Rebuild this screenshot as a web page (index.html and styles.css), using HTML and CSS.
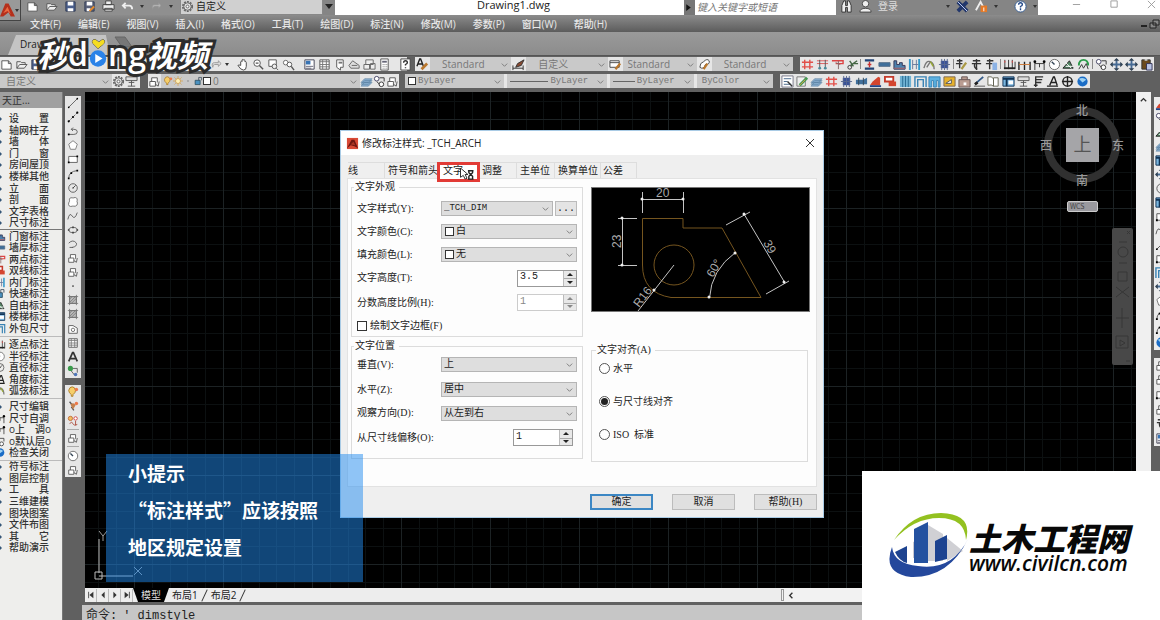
FILE: index.html
```html
<!DOCTYPE html>
<html lang="zh-CN">
<head>
<meta charset="utf-8">
<title>Drawing1.dwg</title>
<link rel="stylesheet" href="styles.css">
</head>
<body>
<svg class="defs" aria-hidden="true">
<symbol id="new" viewBox="0 0 14 14"><path d="M2 3h7l3 3v6H2zM9 3v3h3" fill="#fff" stroke="#555"/></symbol>
<symbol id="open" viewBox="0 0 14 14"><path d="M2 11V4h4l1 1h4v2M2 11l3-4h8l-3 4z" fill="#eee" stroke="#555"/></symbol>
<symbol id="save" viewBox="0 0 14 14"><path d="M2 2h10v10H2z" fill="#4a5f8c" stroke="#333c55"/><path d="M4 2h6v4H4zM4 9h6v3H4z" fill="#fff"/></symbol>
<symbol id="saveas" viewBox="0 0 14 14"><path d="M2 2h10v10H2z" fill="#59617a" stroke="#333c55"/><path d="M4 2h6v4H4zM4 9h4v3H4z" fill="#fff"/><path d="M7 12l5-5" stroke="#e58a2a" stroke-width="2"/></symbol>
<symbol id="print" viewBox="0 0 14 14"><path d="M4 1h6v4H4zM1 5h12v5H1zM3 9h8v3H3z" fill="#eee" stroke="#444"/></symbol>
<symbol id="undo" viewBox="0 0 14 14"><path d="M5 3L2 6l3 3M2 6h7q3 0 3 4" fill="none" stroke="#eee" stroke-width="2"/></symbol>
<symbol id="redo" viewBox="0 0 14 14"><path d="M9 3l3 3-3 3V7H5q-2 0-2 3Q1 5 5 5h4z" fill="#ddd" stroke="#999"/></symbol>
<symbol id="gear" viewBox="0 0 14 14"><circle cx="7" cy="7" r="5" fill="none" stroke="#666" stroke-width="2" stroke-dasharray="2 1.2"/><circle cx="7" cy="7" r="4" fill="#ddd" stroke="#666"/><circle cx="7" cy="7" r="1.500" fill="#fff" stroke="#666"/></symbol>
<symbol id="hand" viewBox="0 0 14 14"><path d="M4 8V4q1-1 1.500 0V2q1-1 1.500 0v0q1-1 1.500 1v1q1-1 1.500 1v4q0 4-3 4-3 0-6-5 1-1 3 0z" fill="#fff" stroke="#444"/></symbol>
<symbol id="zoom" viewBox="0 0 14 14"><circle cx="5.500" cy="5.500" r="3.500" fill="#fff" stroke="#555"/><path d="M8 8l4 4M4 5.500h3" stroke="#555" stroke-width="1.500"/></symbol>
<symbol id="zwin" viewBox="0 0 14 14"><path d="M2 2h8v7H2z" fill="#fff" stroke="#555"/><circle cx="8" cy="9" r="2.500" fill="#eee" stroke="#555"/><path d="M10 11l2 2" stroke="#555"/></symbol>
<symbol id="zprev" viewBox="0 0 14 14"><circle cx="4" cy="5" r="2.500" fill="#fff" stroke="#666"/><circle cx="8" cy="7" r="2.500" fill="#fff" stroke="#555"/><path d="M10 9l3 4" stroke="#555" stroke-width="1.500"/></symbol>
<symbol id="sheet" viewBox="0 0 14 14"><path d="M2 2h10v10H2z" fill="#fff" stroke="#445"/><path d="M3 3h5v4H3z" fill="#3874b5"/><path d="M3 9h8M3 11h6" stroke="#667"/></symbol>
<symbol id="table" viewBox="0 0 14 14"><path d="M2 2h10v10H2z" fill="#fff" stroke="#555"/><path d="M2 4h10M2 7h10M2 9.500h10M5 2v10M9 2v10" stroke="#777"/></symbol>
<symbol id="page" viewBox="0 0 14 14"><path d="M4 2h7v8H8v3L4 10z" fill="#fff" stroke="#555"/><path d="M6 4h4v2H6z" fill="#777"/></symbol>
<symbol id="house" viewBox="0 0 14 14"><path d="M1 8l4-5 7 5v3H3zM4 8h6" fill="#ddd" stroke="#666"/></symbol>
<symbol id="boxes" viewBox="0 0 14 14"><path d="M3 2h8v5H3zM1 7h6v5H1zM8 6h5v6H8z" fill="#eee" stroke="#666"/></symbol>
<symbol id="calc" viewBox="0 0 14 14"><path d="M3 1h8v12H3z" fill="#fff" stroke="#555"/><path d="M4.500 3h5v2h-5z" fill="#667"/><path d="M5 7h5M5 9h5M5 11h5" stroke="#777" stroke-dasharray="1 1"/></symbol>
<symbol id="help" viewBox="0 0 14 14"><path d="M2 1h10v12H2z" fill="#fff" stroke="#444"/><path d="M5 5q0-2 2-2t2 2q0 1-2 2v1m0 2v1" fill="none" stroke="#333" stroke-width="1.500"/></symbol>
<symbol id="astyle" viewBox="0 0 14 14"><path d="M1 9l3-8h1l3 8M2.500 6.500h4" fill="none" stroke="#222" stroke-width="1.500"/><path d="M6 12l6-6" stroke="#b9772e" stroke-width="3"/></symbol>
<symbol id="dstyle" viewBox="0 0 14 14"><path d="M1 11h11M1 8v5M12 8v5" stroke="#333"/><path d="M4 10l2-4 7-4-3 6z" fill="#8b4b31" stroke="#333"/></symbol>
<symbol id="tstyle" viewBox="0 0 14 14"><path d="M1 3h10v7H1zM1 5h10" fill="#fff" stroke="#444"/><path d="M7 12l5-6" stroke="#b9772e" stroke-width="2.500"/></symbol>
<symbol id="mstyle" viewBox="0 0 14 14"><path d="M2 10q0-5 4-6 4-4 6-1 1 4-4 4-2 6-6 3z" fill="#fff" stroke="#444"/><path d="M6 12l4-6" stroke="#b9772e" stroke-width="2.500"/></symbol>
<symbol id="hash" viewBox="0 0 14 14"><path d="M4 2v10M9.500 2v10M1 4.500h12M1 9.500h12" stroke="#e2504a" stroke-width="1.500"/></symbol>
<symbol id="hash2" viewBox="0 0 14 14"><path d="M1 3h12M1 6h12" stroke="#d55"/><path d="M4 2v8M10 2v8" stroke="#555"/><circle cx="4" cy="11" r="1.500" fill="#4a8a9a"/><circle cx="10" cy="11" r="1.500" fill="#4a8a9a"/></symbol>
<symbol id="axis" viewBox="0 0 14 14"><path d="M1 3h12v3H5" fill="none" stroke="#d44" stroke-width="1.500"/><path d="M8 3v9M5 5l5 2" stroke="#866"/></symbol>
<symbol id="snip" viewBox="0 0 14 14"><circle cx="4" cy="10" r="2" fill="none" stroke="#333"/><path d="M5 8l7-5M4 3l4 6M8 6h5" stroke="#464" stroke-width="1.500"/></symbol>
<symbol id="ibeam" viewBox="0 0 14 14"><path d="M2 2.500h10M2 11.500h10" stroke="#247" stroke-width="2.500"/><path d="M7 4v6M5 7h4" stroke="#c33" stroke-width="1.500"/></symbol>
<symbol id="wall" viewBox="0 0 14 14"><path d="M1 5h12v4H1z" fill="#3f6f9b" stroke="#57708a"/></symbol>
<symbol id="wall2" viewBox="0 0 14 14"><path d="M1 5h8l4-2v7H1z" fill="#3f6f9b"/><path d="M4 3v8M9 3v8" stroke="#345"/></symbol>
<symbol id="stair" viewBox="0 0 14 14"><path d="M1 12V3h3v4h3V5h3v3h3v4z" fill="#4c80ad" stroke="#335"/><path d="M1 11h12" stroke="#b66"/></symbol>
<symbol id="column" viewBox="0 0 14 14"><path d="M2 1v12M12 1v12" stroke="#39c" stroke-width="2"/><path d="M5 2v10M9 2v10M5 7h6" stroke="#679"/></symbol>
<symbol id="arcd" viewBox="0 0 14 14"><path d="M1 11Q3 2 8 4q4 2 4 8M8 4l-4 6" fill="none" stroke="#777" stroke-width="1.500"/><path d="M8 4l3 5" stroke="#9a3" stroke-width="1.500"/></symbol>
<symbol id="block" viewBox="0 0 14 14"><path d="M3 3h8v8H3z" fill="#38519a"/><path d="M7 1v12M1 7h12M4 1v12M10 1v12" stroke="#57698f"/></symbol>
<symbol id="chair" viewBox="0 0 14 14"><path d="M7 1v12M3 3h8M2 6h10M5 6q-1 5 3 6" fill="none" stroke="#333" stroke-width="1.500"/></symbol>
<symbol id="chairg" viewBox="0 0 14 14"><path d="M5 1v10M2 3h6M1 6h7" stroke="#333" stroke-width="1.500"/><path d="M7 12l5-7" stroke="#a94" stroke-width="2.500"/></symbol>
<symbol id="chairb" viewBox="0 0 14 14"><path d="M5 1v11M2 3h7M1 6h7" stroke="#333" stroke-width="1.500"/><path d="M8 5h5v8H8z" fill="#8bb2e5"/></symbol>
<symbol id="dimv" viewBox="0 0 14 14"><path d="M2 2v10M6 2v10M10 2v10M13 4v8" stroke="#333"/><path d="M1 11h12" stroke="#222" stroke-width="2"/><path d="M2 3v2M10 3v2" stroke="#e44"/></symbol>
<symbol id="dimh" viewBox="0 0 14 14"><path d="M1 4v9M7 4v9M13 4v9" stroke="#222" stroke-width="1.500"/><path d="M1 7h12" stroke="#c73"/></symbol>
<symbol id="dimb" viewBox="0 0 14 14"><path d="M2 4v9M12 4v9M2 6h10M7 6v4" stroke="#333"/><circle cx="2" cy="4" r="1.500"/><circle cx="12" cy="4" r="1.500"/></symbol>
<symbol id="clock" viewBox="0 0 14 14"><circle cx="7" cy="7" r="5.500" fill="#fff" stroke="#666"/><path d="M7 7L4 4" stroke="#345" stroke-width="1.500"/></symbol>
<symbol id="tri" viewBox="0 0 14 14"><path d="M1 11l7-8 4 8z" fill="#586" stroke="#222"/><path d="M4 9h8M4 5l6 6" stroke="#fff"/></symbol>
<symbol id="cycle" viewBox="0 0 14 14"><path d="M2 8q0-6 5-6t5 6" fill="none" stroke="#2b9b49" stroke-width="2"/><path d="M2 12l3-5 2 4 3-5 2 6" fill="none" stroke="#333"/></symbol>
<symbol id="links" viewBox="0 0 14 14"><circle cx="4" cy="4" r="2.500" fill="#fff" stroke="#446"/><circle cx="9" cy="10" r="2.500" fill="#fff" stroke="#333"/><path d="M7 3h5v4M4 7l3 3" fill="none" stroke="#333"/></symbol>
<symbol id="move" viewBox="0 0 14 14"><path d="M7 1v12M1 7h12" stroke="#456a94" stroke-width="2"/><path d="M7 0l3 3H4zM7 14l3-3H4zM0 7l3-3v6zM14 7l-3-3v6z" fill="#345"/></symbol>
<symbol id="paste" viewBox="0 0 14 14"><path d="M2 2h9v10H2z" fill="#6b4a1d" stroke="#333"/><path d="M5 1h3v2H5z" fill="#ccc"/><path d="M7 6h6v7H7z" fill="#b9c4e5" stroke="#335"/></symbol>
<symbol id="list" viewBox="0 0 14 14"><path d="M1 1h12v12H1z" fill="#fff" stroke="#778"/><path d="M3 4h8M3 7h4M3 10h8" stroke="#468"/><path d="M7 7l5 5" stroke="#333" stroke-width="1.500"/></symbol>
<symbol id="pencil" viewBox="0 0 14 14"><path d="M1 2h9v10H1z" fill="#eee" stroke="#777"/><path d="M4 11l8-8" stroke="#495" stroke-width="3"/><path d="M4 11l6-6" stroke="#e0a545"/></symbol>
<symbol id="layers" viewBox="0 0 14 14"><path d="M1 8l4-4h8l-4 4zM1 10l4-4h8l-4 4zM1 12l4-4h8l-4 4z" fill="#8aafd0" stroke="#557c9d" stroke-width=".6"/></symbol>
<symbol id="roof" viewBox="0 0 14 14"><path d="M1 11l3-4 6-5 2 1v8z" fill="#d4452f"/><path d="M1 12h12" stroke="#248" stroke-width="2"/></symbol>
<symbol id="redbox" viewBox="0 0 14 14"><path d="M1 2h9v5H1z" fill="#fff" stroke="#c43b2b" stroke-width="2"/><path d="M5 7h8v5H5z" fill="#d4452f"/></symbol>
<symbol id="curtain" viewBox="0 0 14 14"><path d="M1 1h12v12H1z" fill="#6fb2d3"/><path d="M4 1v12M7 1v12M10 1v12" stroke="#28698f"/></symbol>
<symbol id="frame" viewBox="0 0 14 14"><path d="M1 13V2h12v11M4 13V5h6v8" fill="none" stroke="#3983b4" stroke-width="1.500"/></symbol>
<symbol id="frame2" viewBox="0 0 14 14"><path d="M1 13V2h12v11h-2V6H9v7H6V6H4v7z" fill="#5bb0e0" stroke="#3983b4"/></symbol>
<symbol id="note" viewBox="0 0 14 14"><path d="M1 2h12v10H1z" fill="#e6b12c" stroke="#765"/><path d="M3 9l6-4v4z" fill="#fff" stroke="#555"/></symbol>
<symbol id="bag" viewBox="0 0 14 14"><path d="M1 5h12v8H1zM4 5V2h6v3" fill="#b99c91" stroke="#655"/><path d="M6 8h3v3H6z" fill="#fff"/></symbol>
<symbol id="brush" viewBox="0 0 14 14"><path d="M1 12h12" stroke="#555"/><path d="M3 9l8-7" stroke="#345b89" stroke-width="2"/><path d="M2 10l3-2" stroke="#222" stroke-width="3"/></symbol>
<symbol id="pages" viewBox="0 0 14 14"><path d="M1 2q4-1 6 2v8q-2-2-6-1zM7 3h5v9H7z" fill="#fff" stroke="#665"/></symbol>
<symbol id="window" viewBox="0 0 14 14"><path d="M1 2h12v10H1z" fill="#7ab6df" stroke="#135"/><path d="M1 4h12M5 4v8" stroke="#135" stroke-width="2"/><path d="M7 6h5v4H7z" fill="#fff"/></symbol>
<symbol id="lamp" viewBox="0 0 14 14"><path d="M1 2h12v4H1zM7 6v6M3 12h8M4 8h6" fill="#ddd" stroke="#555"/></symbol>
<symbol id="ef" viewBox="0 0 14 14"><path d="M4 13V2h8M4 5h7M4 8h6M2 11h4" fill="none" stroke="#333" stroke-width="1.500"/></symbol>
<symbol id="atext" viewBox="0 0 14 14"><path d="M4 11l4-9h1l3 9M5 8h6M1 12h12" fill="none" stroke="#222" stroke-width="1.500"/></symbol>
<symbol id="target" viewBox="0 0 14 14"><circle cx="7" cy="7" r="5" fill="none" stroke="#222" stroke-width="1.500"/><path d="M7 1v12M1 7h12" stroke="#222" stroke-width="1.500"/></symbol>
<symbol id="globe" viewBox="0 0 14 14"><circle cx="7" cy="7" r="5.500" fill="#1b6dc6"/><path d="M3 4q5-2 8 1l-4 3z" fill="#9ed2f3"/></symbol>
<symbol id="line" viewBox="0 0 14 14"><path d="M2 12L12 2" stroke="#555"/><circle cx="2" cy="12" r="1"/><circle cx="12" cy="2" r="1"/></symbol>
<symbol id="pline" viewBox="0 0 14 14"><path d="M2 12L12 2" stroke="#555" stroke-dasharray="3 1"/><circle cx="2" cy="12" r="1.300"/><circle cx="7" cy="7" r="1.300"/><circle cx="12" cy="2" r="1.300"/></symbol>
<symbol id="poly" viewBox="0 0 14 14"><path d="M2 11h6q4 0 4-3t-4-3H5M7 3L5 5l2 2" fill="none" stroke="#555"/><path d="M1 10h2v2H1z"/></symbol>
<symbol id="pent" viewBox="0 0 14 14"><path d="M7 2l5 4-2 6H4L2 6z" fill="#fff" stroke="#777"/></symbol>
<symbol id="rect" viewBox="0 0 14 14"><path d="M2 4h10v7H2z" fill="#fff" stroke="#555"/><path d="M1 10h2v2H1zM11 3h2v2h-2z"/></symbol>
<symbol id="arc" viewBox="0 0 14 14"><path d="M2 12Q2 4 12 3" fill="none" stroke="#555"/><path d="M1 11h2v2H1zM4 5h2v2H4zM11 2h2v2h-2z"/></symbol>
<symbol id="circle" viewBox="0 0 14 14"><circle cx="7" cy="7" r="5" fill="none" stroke="#555"/><path d="M7 7l3-3M6 7h2" stroke="#333"/></symbol>
<symbol id="cloud" viewBox="0 0 14 14"><path d="M3 5q-1-3 3-3 1 1 2 0 4-1 4 3-1 1 0 2 1 5-4 5-1-1-2 0-5 1-4-4 1-1 1-3z" fill="#fff" stroke="#666"/></symbol>
<symbol id="region" viewBox="0 0 14 14"><path d="M2 3h5l5 3v6H2z" fill="#fff" stroke="#555"/><circle cx="7" cy="8" r="2" fill="none" stroke="#666"/></symbol>
<symbol id="spline" viewBox="0 0 14 14"><path d="M1 11q2-9 5-4t6-4" fill="none" stroke="#555"/></symbol>
<symbol id="ellipse" viewBox="0 0 14 14"><ellipse cx="7" cy="7" rx="5" ry="3" fill="none" stroke="#555"/><path d="M6 3h2v2H6zM6 9h2v2H6zM1 6h2v2H1zM11 6h2v2h-2z" fill="#444"/></symbol>
<symbol id="earc" viewBox="0 0 14 14"><path d="M2 6q5-5 9 0 1 4-5 5M3 11h4" fill="none" stroke="#555"/></symbol>
<symbol id="insert" viewBox="0 0 14 14"><path d="M4 7V3h6v5M2 7h6v5H2z" fill="#fff" stroke="#555"/><path d="M8 10l3 2 1-5" fill="none" stroke="#555"/></symbol>
<symbol id="dot" viewBox="0 0 14 14"><circle cx="7" cy="7" r="1" fill="#333"/></symbol>
<symbol id="hatch" viewBox="0 0 14 14"><path d="M3 3h8v8H3z" fill="#bbb" stroke="#666"/><path d="M3 6l3-3M3 10l7-7M5 11l6-6M1 3h12M1 11h12M3 1v12M11 1v12" stroke="#777"/></symbol>
<symbol id="letter" viewBox="0 0 14 14"><path d="M2 12L6.500 2h1L12 12M4 9h6" fill="none" stroke="#333" stroke-width="2"/></symbol>
<symbol id="greenlink" viewBox="0 0 14 14"><circle cx="4" cy="4" r="3" fill="#3a9b4c"/><path d="M7 4h5v5M5 7l4 5" fill="none" stroke="#555"/><circle cx="10" cy="11" r="2" fill="#4d75b8"/></symbol>
<symbol id="bulb" viewBox="0 0 14 14"><path d="M5 10q-3-2-3-5 1-4 4-4t4 4q0 3-3 5v2H5z" fill="#f6ce69" stroke="#a77722"/><circle cx="11" cy="4" r="2" fill="#ec7849"/></symbol>
<symbol id="bulb2" viewBox="0 0 14 14"><path d="M3 2l5 6M8 12L5 8" stroke="#555" stroke-width="1.500"/><path d="M4 5q4-3 6 1l-3 5z" fill="#c4804d"/><circle cx="11" cy="4" r="2" fill="#ec7849"/></symbol>
<symbol id="bulb3" viewBox="0 0 14 14"><circle cx="4" cy="4" r="2.500" fill="#f3bc5c" stroke="#b63"/><circle cx="10" cy="4" r="2" fill="#fff" stroke="#c33"/><path d="M3 10q3-3 4 0t5 1M10 7v5" fill="none" stroke="#a43"/></symbol>
<symbol id="sun" viewBox="0 0 14 14"><circle cx="7" cy="7" r="3.500" fill="#fff0b7" stroke="#c69138"/><path d="M7 0v3M7 11v3M0 7h3M11 7h3M2 2l2 2M10 10l2 2M12 2l-2 2M4 10l-2 2" stroke="#d6a14b"/></symbol>
<symbol id="lock" viewBox="0 0 14 14"><path d="M3 6h7v6H3z" fill="#4a91c0" stroke="#245"/><path d="M8 6V2h4v4" fill="none" stroke="#345"/></symbol>
<symbol id="bino" viewBox="0 0 14 14"><path d="M2 13V6l2-5h2v5h2V1h2l2 5v7H8V8H6v5z" fill="#eee" stroke="#333"/></symbol>
<symbol id="user" viewBox="0 0 14 14"><circle cx="7" cy="4" r="3.500" fill="#eee" stroke="#444"/><path d="M1 13q0-4 6-4t6 4z" fill="#eee" stroke="#444"/></symbol>
<symbol id="app" viewBox="0 0 14 14"><path d="M0 13L5 1h3l6 12h-4L8 9l-5 4z" fill="#b5301c"/><path d="M3 10l4-6 3 7-3-3z" fill="#ed6a42"/></symbol>
</svg>

<header class="titlebar">
  <button class="app-button" aria-label="应用程序"><svg><use href="#app"/></svg><i class="caret"></i></button>
  <div class="quick"><svg><use href="#new"/></svg><svg><use href="#open"/></svg><svg><use href="#save"/></svg><svg><use href="#saveas"/></svg><svg><use href="#print"/></svg><svg><use href="#undo"/></svg><i class="caret"></i><svg class="faint"><use href="#redo"/></svg><i class="caret"></i></div>
  <div class="workspace-pick"><svg><use href="#gear"/></svg><select aria-label="工作空间"><option>自定义</option></select></div>
  <i class="quick-more"></i>
  <div class="doc-title">Drawing1.dwg</div>
  <button class="expand" aria-label="展开"><svg viewBox="0 0 8 8"><path d="M2 1v6l4-3z" fill="#111"/></svg></button>
  <input class="search" type="text" aria-label="搜索" placeholder="键入关键字或短语">
  <div class="account"><svg><use href="#bino"/></svg><svg><use href="#user"/></svg><span>登录</span><i class="caret push"></i>
    <svg viewBox="0 0 14 14"><path d="M2 2l10 10M12 2L2 12" stroke="#22376c" stroke-width="4"/><path d="M2 2l10 10" stroke="#c9d7ff"/></svg>
    <svg class="mid" viewBox="0 0 14 14"><path d="M1 11L6 2l4 8" fill="none" stroke="#eee" stroke-width="2"/><path d="M6 6h7v7H6z" fill="#e57a28"/><path d="M9 8h1v4H9z" fill="#fff"/></svg><i class="caret"></i>
    <svg class="ask" viewBox="0 0 14 14"><circle cx="7" cy="7" r="6" fill="#fff" stroke="#31598f"/><path d="M5 5q0-2 2-2t2 2q0 1-2 2v1m0 1v2" fill="none" stroke="#244b8b" stroke-width="1.500"/></svg><i class="caret"></i>
  </div>
  <div class="win-buttons"><svg viewBox="0 0 10 10"><path d="M1 5h8" stroke="#999"/></svg><svg viewBox="0 0 10 10"><path d="M1 1h7v7H1z" fill="none" stroke="#999"/></svg><svg viewBox="0 0 10 10"><path d="M1 1l8 8M9 1L1 9" stroke="#999"/></svg></div>
</header>

<nav class="menubar">
  <a href="#">文件(F)</a><a href="#">编辑(E)</a><a href="#">视图(V)</a><a href="#">插入(I)</a><a href="#">格式(O)</a><a href="#">工具(T)</a><a href="#">绘图(D)</a><a href="#">标注(N)</a><a href="#">修改(M)</a><a href="#">参数(P)</a><a href="#">窗口(W)</a><a href="#">帮助(H)</a>
  <svg class="mdi" viewBox="0 0 20 10"><path d="M1 7h6" stroke="#222" stroke-width="2"/><path d="M13 1h6v5h-6zM10 4h6v5h-6z" fill="#888" stroke="#222"/></svg>
</nav>

<div class="doc-tabs"><div class="doc-tab">Draw</div><svg viewBox="0 0 20 14"><path d="M1 2h10l7 10H8z" fill="#777" stroke="#666"/></svg></div>

<div class="toolbars">
  <div class="bar-row">
    <div class="bar std"><svg><use href="#new"/></svg><svg><use href="#open"/></svg><svg><use href="#save"/></svg><svg class="redo-tool"><use href="#redo"/></svg><i class="caret"></i><i class="sep"></i><svg><use href="#hand"/></svg><svg><use href="#zoom"/></svg><svg><use href="#zwin"/></svg><svg><use href="#zprev"/></svg><i class="sep"></i><svg><use href="#sheet"/></svg><svg><use href="#table"/></svg><svg><use href="#page"/></svg><svg><use href="#house"/></svg><svg><use href="#boxes"/></svg><svg><use href="#calc"/></svg><i class="sep"></i><svg><use href="#help"/></svg></div>
    <div class="bar styles">
      <svg><use href="#astyle"/></svg><select aria-label="文字样式"><option>Standard</option></select>
      <svg><use href="#dstyle"/></svg><select aria-label="标注样式"><option>自定义</option></select>
      <svg><use href="#tstyle"/></svg><select class="tight" aria-label="表格样式"><option>Standard</option></select>
      <svg><use href="#mstyle"/></svg><select aria-label="引线样式"><option>Standard</option></select>
    </div>
    <div class="bar arch"><svg><use href="#hash"/></svg><svg><use href="#hash2"/></svg><svg><use href="#axis"/></svg><svg><use href="#snip"/></svg><i class="sep"></i><svg><use href="#ibeam"/></svg><svg><use href="#wall"/></svg><svg><use href="#stair"/></svg><svg><use href="#column"/></svg><svg><use href="#arcd"/></svg><svg><use href="#block"/></svg><i class="sep"></i><svg><use href="#chairg"/></svg><svg><use href="#chair"/></svg><svg><use href="#chairb"/></svg><i class="sep"></i><svg><use href="#dimv"/></svg><svg><use href="#dimh"/></svg><svg><use href="#dimb"/></svg><svg><use href="#clock"/></svg><svg><use href="#tri"/></svg><svg><use href="#cycle"/></svg><i class="sep"></i><svg><use href="#links"/></svg><svg><use href="#move"/></svg><svg><use href="#move"/></svg><svg><use href="#paste"/></svg></div>
  </div>
  <div class="bar-row">
    <div class="bar space"><select aria-label="工作空间"><option>自定义</option></select><svg><use href="#gear"/></svg><svg><use href="#lamp"/></svg></div>
    <div class="bar layer"><svg><use href="#insert"/></svg><div class="layer-pick"><svg><use href="#bulb"/></svg><svg><use href="#sun"/></svg><svg class="faint"><use href="#dot"/></svg><svg><use href="#lock"/></svg><i class="swatch"></i><select aria-label="图层"><option>0</option></select></div><svg><use href="#layers"/></svg><svg><use href="#links"/></svg><svg><use href="#insert"/></svg></div>
    <div class="bar props"><div class="prop"><i class="swatch"></i><select aria-label="颜色"><option>ByLayer</option></select></div><div class="prop"><i class="stroke"></i><select aria-label="线型"><option>ByLayer</option></select></div><div class="prop narrow"><i class="stroke short"></i><select aria-label="线宽"><option>ByLayer</option></select></div><div class="prop last"><select aria-label="打印样式"><option>ByColor</option></select></div></div>
    <div class="bar arch2"><svg><use href="#list"/></svg><svg><use href="#pencil"/></svg><svg><use href="#layers"/></svg><svg><use href="#hash"/></svg><svg><use href="#block"/></svg><svg><use href="#wall2"/></svg><svg><use href="#roof"/></svg><svg><use href="#redbox"/></svg><svg><use href="#curtain"/></svg><svg><use href="#frame"/></svg><svg><use href="#frame2"/></svg><svg><use href="#note"/></svg><svg><use href="#bag"/></svg><svg><use href="#brush"/></svg><svg><use href="#pages"/></svg><svg><use href="#window"/></svg><svg><use href="#lamp"/></svg><svg><use href="#ef"/></svg><svg><use href="#atext"/></svg><svg><use href="#target"/></svg><svg><use href="#globe"/></svg></div>
  </div>
</div>

<main class="work">
  <aside class="side">
    <h2>天正...</h2>
    <ul class="g10"><li>设　　置</li><li>轴网柱子</li><li>墙　　体</li><li>门　　窗</li><li>房间屋顶</li><li>楼梯其他</li><li>立　　面</li><li>剖　　面</li><li>文字表格</li><li>尺寸标注</li></ul>
    <ul class="g9"><li><svg><use href="#stair"/></svg>门窗标注</li><li><svg><use href="#wall"/></svg>墙厚标注</li><li><svg><use href="#axis"/></svg>两点标注</li><li><svg><use href="#redbox"/></svg>双线标注</li><li><svg><use href="#column"/></svg>内门标注</li><li><svg><use href="#lock"/></svg>快速标注</li><li><svg><use href="#tri"/></svg>自由标注</li><li><svg><use href="#window"/></svg>楼梯标注</li><li><svg><use href="#frame"/></svg>外包尺寸</li></ul>
    <ul class="g5"><li><svg><use href="#dimv"/></svg>逐点标注</li><li><svg><use href="#clock"/></svg>半径标注</li><li><svg><use href="#circle"/></svg>直径标注</li><li><svg><use href="#atext"/></svg>角度标注</li><li><svg><use href="#arcd"/></svg>弧弦标注</li></ul>
    <ul class="g5 edit"><li>尺寸编辑</li><li><svg><use href="#dimb"/></svg>尺寸自调</li><li><svg><use href="#dimb"/></svg>o上　调o</li><li><svg><use href="#links"/></svg>o默认层o</li><li><svg><use href="#globe"/></svg>检查关闭</li></ul>
    <ul class="g8"><li>符号标注</li><li>图层控制</li><li>工　　具</li><li>三维建模</li><li>图块图案</li><li>文件布图</li><li>其　　它</li><li>帮助演示</li></ul>
  </aside>

  <div class="stage">
    <div class="stage-top">
      <div class="strip">
        <div class="strip-set draw"><svg><use href="#line"/></svg><svg><use href="#pline"/></svg><svg><use href="#poly"/></svg><svg><use href="#pent"/></svg><svg><use href="#rect"/></svg><svg><use href="#arc"/></svg><svg><use href="#circle"/></svg><svg><use href="#cloud"/></svg><svg><use href="#spline"/></svg><svg><use href="#ellipse"/></svg><svg><use href="#earc"/></svg><svg><use href="#insert"/></svg><svg><use href="#insert"/></svg><svg><use href="#dot"/></svg><svg><use href="#hatch"/></svg><svg><use href="#hatch"/></svg><svg><use href="#region"/></svg><svg><use href="#table"/></svg><svg><use href="#letter"/></svg><svg><use href="#greenlink"/></svg></div>
        <div class="strip-set lights"><svg><use href="#bulb"/></svg><svg><use href="#bulb2"/></svg><svg><use href="#bulb3"/></svg><i></i><svg><use href="#insert"/></svg><i></i><svg><use href="#clock"/></svg><svg><use href="#insert"/></svg></div>
      </div>

      <div class="center">
        <section class="canvas">
          <svg class="ucs" viewBox="0 0 54 52"><path d="M6 9V43M6 46H40M2 42h7v7H2z" fill="none" stroke="#bbb"/><path d="M6 1l4 5 4-5M10 6v5M41 37l8 8M49 37l-8 8" fill="none" stroke="#999"/></svg>

          <div class="compass">
            <b class="north">北</b><b class="west">西</b><b class="top-face">上</b><b class="east">东</b><b class="south">南</b>
            <span class="wcs">WCS</span>
          </div>
          <svg class="navbar" viewBox="0 0 21 137"><rect width="21" height="137" rx="2" fill="#484848"/><g fill="none" stroke="#363636"><path d="M15 3l3 3M18 3l-3 3M14 133h4"/><circle cx="11" cy="24" r="5"/><path d="M7 14h8M7 35h8M6 44h9v9H6zM4 59l13 10M17 59L4 69M10 80v20M4 90h13M4 108h12v12H4zM8 112l5 3-5 3z"/></g></svg>

          <form class="dialog" role="dialog" aria-label="修改标注样式">
            <div class="dlg-title"><svg viewBox="0 0 14 14"><path d="M1 1h12v12H1z" fill="#d94a36"/><path d="M1 12L6 3h3l4 9-4-2-4-1z" fill="#701711"/><path d="M5 8l3-3 2 4z" fill="#a83524"/></svg><span>修改标注样式: _TCH_ARCH</span><button type="button" class="close" aria-label="关闭"><svg viewBox="0 0 10 10"><path d="M1 1l8 8M9 1L1 9" stroke="#333"/></svg></button></div>
            <div class="dlg-tabs"><button type="button" class="t1">线</button><button type="button" class="t2">符号和箭头</button><button type="button" class="t3 active">文字<svg class="cursor" viewBox="0 0 16 14"><path d="M1 0v10l3-2 2 4 2-1-2-4h3z" fill="#fff" stroke="#222"/><path d="M9 3h6M9 12h6M10 3v2l2 2-2 2v3M14 3v2l-2 2 2 2v3" fill="none" stroke="#222" stroke-width="1.500"/></svg></button><button type="button" class="t4">调整</button><button type="button" class="t5">主单位</button><button type="button" class="t6">换算单位</button><button type="button" class="t7">公差</button></div>
            <div class="dlg-body">
              <div class="col-left">
                <fieldset class="look"><legend>文字外观</legend>
                  <label for="style">文字样式(Y):</label><div class="pair"><select id="style"><option>_TCH_DIM</option></select><button type="button" class="dots">...</button></div>
                  <label for="color">文字颜色(C):</label><div class="color"><i class="swatch"></i><select id="color"><option>白</option></select></div>
                  <label for="fill">填充颜色(L):</label><div class="color"><i class="swatch"></i><select id="fill"><option>无</option></select></div>
                  <label for="height">文字高度(T):</label><div class="spin"><input id="height" type="text" value="3.5"><span class="arrows"><button type="button" class="up" aria-label="增大"></button><button type="button" class="down" aria-label="减小"></button></span></div>
                  <label for="ratio">分数高度比例(H):</label><div class="spin off"><input id="ratio" type="text" value="1" disabled><span class="arrows"><button type="button" class="up" aria-label="增大" disabled></button><button type="button" class="down" aria-label="减小" disabled></button></span></div>
                  <label class="check"><input type="checkbox">绘制文字边框(F)</label>
                </fieldset>
                <fieldset class="place"><legend>文字位置</legend>
                  <label for="vert">垂直(V):</label><select id="vert"><option>上</option></select>
                  <label for="horz">水平(Z):</label><select id="horz"><option>居中</option></select>
                  <label for="dir">观察方向(D):</label><select id="dir"><option>从左到右</option></select>
                  <label for="offset">从尺寸线偏移(O):</label><div class="spin inset"><input id="offset" type="text" value="1"><span class="arrows"><button type="button" class="up" aria-label="增大"></button><button type="button" class="down" aria-label="减小"></button></span></div>
                </fieldset>
              </div>
              <div class="col-right">
                <svg class="preview" viewBox="0 0 219 125">
                  <rect width="219" height="125" fill="#777"/><rect x="1" y="1" width="217" height="123" fill="#000"/>
                  <g fill="none" stroke="#75551f"><path d="M51.500 31.500H92V41H131L170 110.500H80Q51.500 106 51.500 78z"/><circle cx="83" cy="78" r="20"/></g>
                  <g fill="none" stroke="#c4c4c4"><path d="M51.500 5V26M92.500 5V26M51 12.500H92M27 31.500H46M27 78.500H46M31.500 31V79M83 78L47 124M135 38l24-13M175 107l23-13M153 27L194 96M118.500 111Q120 83 145 65"/></g>
                  <g fill="#eee"><circle cx="51" cy="12" r="1.500"/><circle cx="92" cy="12" r="1.500"/><circle cx="31" cy="31" r="1.500"/><circle cx="31" cy="78" r="1.500"/><circle cx="63" cy="103" r="1.500"/><circle cx="118" cy="110" r="1.500"/><circle cx="144" cy="66" r="1.500"/><circle cx="153" cy="27" r="1.500"/><circle cx="193" cy="95" r="1.500"/></g>
                  <g class="pv-text"><text x="65" y="10">20</text><text transform="translate(30 61) rotate(-90)">23</text><text transform="translate(48 121) rotate(-52)">R16</text><text transform="translate(122 91) rotate(-60)">60°</text><text transform="translate(172 56) rotate(60)">39</text></g>
                </svg>
                <fieldset class="align"><legend>文字对齐(A)</legend>
                  <label><input type="radio" name="align">水平</label>
                  <label><input type="radio" name="align" checked>与尺寸线对齐</label>
                  <label><input type="radio" name="align">ISO&nbsp; 标准</label>
                </fieldset>
              </div>
            </div>
            <div class="dlg-foot"><button type="button" class="ok">确定</button><button type="button">取消</button><button type="button">帮助(H)</button></div>
          </form>

          <div class="tip"><p>小提示</p><p>“标注样式”应该按照</p><p>地区规定设置</p></div>
        </section>

        <div class="layouts">
          <div class="steps"><button aria-label="第一个"><svg viewBox="0 0 10 10"><path d="M2 1v8" stroke="#333"/><path d="M8 1v8L3 5z" fill="#333"/></svg></button><button aria-label="上一个"><svg viewBox="0 0 10 10"><path d="M7 1v8L3 5z" fill="#333"/></svg></button><button aria-label="下一个"><svg viewBox="0 0 10 10"><path d="M3 1v8l4-4z" fill="#333"/></svg></button><button aria-label="最后一个"><svg viewBox="0 0 10 10"><path d="M8 1v8" stroke="#333"/><path d="M2 1v8l5-4z" fill="#333"/></svg></button></div>
          <button class="layout on">模型</button><button class="layout">布局1</button><i class="slash"></i><button class="layout">布局2</button><i class="slash"></i>
          <div class="hscroll"><i class="split"></i><svg viewBox="0 0 10 10"><path d="M6 2L3 5l3 3" fill="none" stroke="#333" stroke-width="1.500"/></svg></div>
        </div>
      </div>

      <div class="vscroll"><svg viewBox="0 0 10 10"><path d="M2 7l3-3 3 3" fill="none" stroke="#333" stroke-width="1.500"/></svg></div>
      <div class="edge">
        <div class="edge-set e1"><svg><use href="#roof"/></svg><svg><use href="#links"/></svg><svg><use href="#tri"/></svg><svg><use href="#layers"/></svg><svg><use href="#window"/></svg><svg><use href="#move"/></svg><svg><use href="#circle"/></svg><svg><use href="#window"/></svg><svg><use href="#rect"/></svg><svg><use href="#spline"/></svg><svg><use href="#line"/></svg><svg><use href="#rect"/></svg><svg><use href="#frame"/></svg><svg><use href="#move"/></svg><svg><use href="#pent"/></svg><svg><use href="#arc"/></svg><svg><use href="#arc"/></svg><svg><use href="#globe"/></svg></div>
        <div class="edge-set e2"><svg><use href="#insert"/></svg><svg><use href="#insert"/></svg><svg><use href="#rect"/></svg><svg><use href="#insert"/></svg><svg><use href="#chair"/></svg><svg><use href="#sheet"/></svg></div>
      </div>
    </div>
    <div class="command"><label for="cmd">命令:</label><input id="cmd" type="text" value="' dimstyle"></div>
  </div>
</main>

<div class="watermark"><span>秒</span><span class="latin">d</span><svg viewBox="0 0 22 34"><path d="M11 11L5 5q-1-4 3-4l4 3 4-3q4 1 1 5z" fill="#f5dc20" stroke="#333"/><circle cx="11" cy="22" r="9" fill="#2b83e8"/><path d="M8 17v10l8-5z" fill="#fff"/></svg><span class="latin">ng</span><span>视频</span></div>

<div class="brand">
  <svg viewBox="0 0 80 66">
    <path d="M24 45V29l12-5v22z" fill="#c9c9d2"/><path d="M39 12l15 9v27H39z" fill="#d0d0d4"/><path d="M58 25l16 13-16 10z" fill="#d0d0d4"/>
    <path d="M6 39l12-6v17q-8-2-12-11z" fill="#1d4390"/><path d="M25 16l14-7v41H25z" fill="#2452a0"/><path d="M46 28l12-6v24l-12 3z" fill="#1d4390"/>
    <path d="M5 27Q23 0 52 0 84 1 77 27 76 5 50 5 25 5 5 27z" fill="#93c120"/>
    <path d="M3 34Q-7 60 22 64 60 65 79 26 63 58 29 53 5 51 3 34z" fill="#24489c"/>
  </svg>
  <div class="brand-text"><strong>土木工程网</strong><span>www.civilcn.com</span></div>
</div>
</body>
</html>
```

FILE: styles.css
```css
* { box-sizing: border-box; }
body {
  margin: 0;
  height: 100vh;
  display: flex;
  flex-direction: column;
  overflow: hidden;
  position: relative;
  background: #606060;
  color: #222;
  font: 10px/12px "Open Sans", "Noto Sans CJK SC", sans-serif;
}
button, input, select { font: inherit; color: inherit; margin: 0; border-radius: 0; }
button { padding: 0; border: 0; background: none; }
ul, p, h2 { margin: 0; padding: 0; list-style: none; }
svg { width: 13px; height: 13px; flex: none; display: block; }
.defs { position: absolute; width: 0; height: 0; }
select {
  appearance: none;
  border: 0;
  padding: 0 12px 0 2px;
  min-width: 0;
  background: url("data:image/svg+xml,%3Csvg xmlns='http://www.w3.org/2000/svg' viewBox='0 0 10 10'%3E%3Cpath d='M2 4l3 3 3-3' fill='none' stroke='%23777'/%3E%3C/svg%3E") no-repeat right 2px center / 9px 9px;
}
.caret { width: 0; height: 0; border: 2px solid transparent; border-top: 3px solid #333; border-bottom: 0; flex: none; }
.faint { opacity: .5; }
.swatch { width: 8px; height: 8px; flex: none; border: 1px solid #333; background: #fff; }

/* title bar */
.titlebar { flex: none; height: 15px; display: flex; background: #fff; }
.app-button { width: 21px; height: 21px; flex: none; background: #999; border: 1px solid #444; border-width: 0 1px 1px 0; position: relative; z-index: 1; display: flex; align-items: center; }
.app-button svg { width: 15px; height: 18px; }
.quick { width: 159px; flex: none; background: #8f8f8f; display: flex; align-items: center; gap: 6px; padding: 0 0 3px 5px; }
.workspace-pick { width: 143px; flex: none; display: flex; align-items: center; background: #d0d0d0; border: 1px solid #888; border-top: 0; padding-bottom: 2px; }
.workspace-pick select { flex: 1; background-image: none; position: relative; }
.quick-more { width: 12px; background: #858585; flex: none; padding: 4px 2px; }
.quick-more::before { content: ""; display: block; border: 4px solid transparent; border-top: 5px solid #222; border-bottom: 0; }
.doc-title { flex: 1; text-align: center; font-size: 11px; line-height: 9px; padding-left: 8px; }
.expand { width: 11px; background: #777; }
.expand svg { width: 9px; height: 9px; }
.search { width: 141px; border: 0; padding: 0 0 2px 2px; font-style: italic; }
.search::placeholder { color: #777; }
.account { width: 202px; flex: none; background: #858585; display: flex; align-items: center; gap: 6px; padding: 0 4px 3px; color: #ddd; white-space: nowrap; }
.account .push { margin-left: 42px; }
.account .ask { margin-left: 10px; }
.win-buttons { width: 122px; display: flex; justify-content: space-between; padding: 0 4px 4px 34px; }
.win-buttons svg { width: 9px; height: 9px; }

/* menus and document tabs */
.menubar { flex: none; height: 17px; display: flex; align-items: center; gap: 17px; padding: 0 0 0 30px; background: linear-gradient(#8c8c8c, #5c5c5c); }
.menubar a { color: #e8e8e8; text-decoration: none; font-weight: 500; }
.mdi { width: 20px; height: 10px; margin-left: auto; }
.doc-tabs { flex: none; height: 24px; padding: 3px 0 0 8px; display: flex; background: linear-gradient(#9a9a9a, #8c8c8c); border-bottom: 1px solid #555; }
.doc-tab { width: 102px; height: 20px; padding: 3px 12px; background: #c4c4c4; clip-path: polygon(8px 0, 96% 0, 100% 100%, 0 100%); }
.doc-tabs svg { width: 20px; height: 14px; margin-left: 4px; }

/* toolbars */
.toolbars { flex: none; padding: 1px 0 4px; display: grid; gap: 3px; color: #777; }
.bar-row { display: flex; height: 14px; }
.bar { display: flex; align-items: center; background: #e6e6e6; flex: none; }
.bar select { height: 14px; }
.bar .sep { width: 1px; height: 10px; background: #888; }
.std { width: 407px; gap: 2px; }
.std .sep { margin: 0 2px; }
.redo-tool { margin-left: 165px; }
.styles { width: 378px; margin-left: 8px; }
.styles svg { margin: 0 1px; }
.styles select { flex: 1; padding-left: 12px; background-color: #c9c9c9; }
.styles .tight { padding-left: 5px; }
.arch { width: 354px; margin-left: 7px; justify-content: space-around; }
.space { width: 140px; }
.space select { width: 112px; padding-left: 6px; background-color: #c9c9c9; }
.layer { width: 251px; margin-left: 8px; }
.layer-pick { flex: 1; height: 14px; display: flex; align-items: center; background: #c9c9c9; padding-left: 2px; }
.layer-pick svg { width: 10px; height: 10px; }
.layer-pick select { flex: 1; }
.props { width: 368px; margin-left: 6px; gap: 3px; font-family: "Liberation Mono", monospace; font-size: 9px; }
.prop { flex: 100; height: 14px; display: flex; align-items: center; padding-left: 3px; background: #c9c9c9; min-width: 0; }
.prop.narrow { flex: 84; }
.prop.last { flex: 76; }
.prop select { flex: 1; }
.stroke { width: 38px; height: 1px; background: #666; flex: none; }
.stroke.short { width: 22px; }
.arch2 { width: 310px; margin-left: 7px; justify-content: space-around; }

/* left menu */
.work { flex: 1; min-height: 0; display: flex; }
.side { width: 63px; flex: none; background: #eeeeec; border-right: 1px solid #777; overflow: hidden; color: #333; font-weight: 500; }
.side h2 { height: 16px; margin-bottom: 5px; padding: 2px; background: #a0a0a0; font-size: 10px; font-weight: 400; }
.side ul { display: grid; grid-auto-rows: 1fr; }
.side li { position: relative; padding-left: 9px; white-space: nowrap; line-height: 11px; min-height: 0; }
.side li::before { content: ""; position: absolute; left: 0; top: 4px; border: 2px solid transparent; border-left-color: #357; }
.side li:has(svg)::before { display: none; }
.side li svg { position: absolute; left: -6px; top: 0; width: 12px; height: 11px; }
.side .g10 { height: 117px; border-bottom: 1px solid #777; margin-bottom: 1px; }
.side .g9 { height: 106px; padding-bottom: 2px; border-bottom: 1px solid #bbb; margin-bottom: 2px; }
.side .g5 { height: 60px; padding-bottom: 1px; border-bottom: 1px solid #bbb; margin-bottom: 2px; }
.side .edit { margin-bottom: 0; }
.side .g8 { height: 93px; }

/* drawing area */
.stage { flex: 1; min-width: 0; display: flex; flex-direction: column; }
.stage-top { flex: 1; min-height: 0; display: flex; }
.strip { width: 22px; padding: 4px 4px 0 2px; flex: none; }
.strip-set { background: #e6e6e6; display: flex; flex-direction: column; justify-content: space-around; align-items: center; }
.strip-set svg { width: 12px; height: 12px; }
.strip-set i { width: 12px; height: 1px; background: #aaa; }
.draw { height: 282px; margin-bottom: 7px; }
.lights { height: 92px; }
.center { flex: 1; min-width: 0; display: flex; flex-direction: column; padding-bottom: 3px; }
.canvas {
  flex: 1;
  min-height: 0;
  position: relative;
  background: #000 url("data:image/svg+xml,%3Csvg xmlns='http://www.w3.org/2000/svg' width='89' height='89'%3E%3Cpath d='M18.500 0v89M36.500 0v89M53.500 0v89M71.500 0v89M0 18.500h89M0 36.500h89M0 53.500h89M0 71.500h89' stroke='%230c1011'/%3E%3Cpath d='M.5 0v89M0 .5h89' stroke='%231c2224'/%3E%3C/svg%3E") 49px 27px;
}
.ucs { position: absolute; left: 8px; bottom: 6px; width: 54px; height: 52px; }
.compass {
  position: absolute;
  right: 16px;
  top: 15px;
  width: 76px;
  height: 76px;
  border: 8px solid #303030;
  border-radius: 50%;
  color: #999;
  font: 12px/14px "Noto Sans CJK SC", sans-serif;
}
.compass b { position: absolute; font-weight: 500; }
.north { left: 24px; top: -12px; }
.south { left: 24px; bottom: -12px; }
.west { left: -12px; top: 23px; }
.east { right: -12px; top: 23px; }
.compass .top-face { left: 14px; top: 13px; width: 33px; height: 34px; background: #a5a5a8; color: #555; font-size: 18px; font-weight: 400; line-height: 30px; text-align: center; }
.wcs { position: absolute; left: 15px; top: 86px; width: 31px; height: 11px; border: 1px solid #ccc; border-radius: 2px; background: #99999e; color: #444; font-size: 7px; line-height: 9px; padding-left: 2px; }
.navbar { position: absolute; right: 3px; top: 136px; width: 21px; height: 137px; }

/* dialog */
.dialog {
  position: absolute;
  left: 255px;
  top: 38px;
  width: 484px;
  border: 1px solid #a9cbe5;
  background: #efefef;
  display: flex;
  flex-direction: column;
  font: 10px/12px "Liberation Serif", "Noto Sans CJK SC", serif;
  color: #222;
}
.dlg-title { height: 24px; padding: 0 8px 0 5px; display: flex; align-items: center; gap: 3px; background: #fff; font: 10px/14px "Open Sans", "Noto Sans CJK SC", sans-serif; }
.close { margin-left: auto; }
.close svg { width: 10px; height: 10px; }
.dlg-tabs { display: flex; padding: 7px 0 0 7px; height: 23px; }
.dlg-tabs button { height: 16px; border: 1px solid #ddd; border-width: 1px 1px 0 0; white-space: nowrap; text-align: left; }
.t1 { width: 37px; }
.t2 { width: 53px; padding-left: 3px; }
.dlg-tabs .active { width: 43px; height: 20px; border: 3px solid #e23b36; background: #fff; position: relative; padding: 0 0 3px 3px; margin-left: -1px; }
.cursor { position: absolute; left: 19px; top: 3px; width: 16px; height: 13px; }
.t4 { width: 37px; padding-left: 2px; }
.t5 { width: 38px; padding-left: 3px; }
.t6 { width: 46px; padding-left: 3px; }
.t7 { width: 36px; padding-left: 2px; }
.dlg-body { margin: 0 6px; padding: 2px 3px 24px; border: 1px solid #e2e2e2; background: #fdfdfd; display: flex; gap: 8px; }
fieldset { margin: 0; min-width: 0; border: 1px solid #dcdcdc; padding: 0 5px; }
legend { padding: 0 4px 0 1px; margin-left: -3px; line-height: 12px; }
.col-left { width: 236px; }
.look, .place { display: grid; grid-template-columns: 84px 1fr; align-items: center; }
.look { grid-template-rows: 23px 23px 23px 24px 25px 21px; padding-top: 4px; }
.place { grid-template-rows: 25px 25px 22px 27px; margin-top: 3px; padding-bottom: 7px; }
.look label, .place label { white-space: nowrap; }
.dialog select { height: 15px; border: 1px solid #b5b5b5; background-color: #dedede; font-family: "Liberation Mono", "Noto Sans CJK SC", monospace; line-height: 13px; width: 100%; }
.look #style { font-size: 9px; }
.pair { display: flex; gap: 2px; }
.pair select { flex: 1; }
.dots { width: 22px; height: 15px; border: 1px solid #bbb; background: #e4e4e4; font-family: "Liberation Mono", monospace; line-height: 10px; }
.color { position: relative; display: flex; align-items: center; }
.color .swatch { position: absolute; left: 4px; width: 9px; height: 9px; }
.color select { padding-left: 14px; }
.spin { justify-self: end; width: 60px; height: 17px; display: flex; border: 1px solid #999; background: #fff; }
.spin input { width: 45px; min-width: 0; border: 0; padding: 0 2px 2px; background: none; font: 10px/12px "Liberation Mono", monospace; }
.arrows { flex: 1; display: grid; grid-template-rows: 1fr 1fr; border-left: 1px solid #bbb; }
.arrows button { min-height: 0; background: #e8e8e8; display: grid; place-items: center; }
.arrows button + button { border-top: 1px solid #aaa; }
.arrows button::before { content: ""; border: 3px solid transparent; }
.arrows .up::before { border-top: 0; border-bottom-color: #222; }
.arrows .down::before { border-bottom: 0; border-top-color: #222; }
.spin.off { border-color: #ccc; color: #888; }
.spin.off .up::before { border-bottom-color: #888; }
.spin.off .down::before { border-top-color: #888; }
.spin.inset { margin-right: 4px; }
.check { grid-column: 1 / 3; }
.check, .align label { display: flex; align-items: center; gap: 3px; }
.check input { appearance: none; width: 10px; height: 10px; border: 1px solid #333; background: #fff; }
.col-right { flex: 1; display: flex; flex-direction: column; padding-right: 3px; }
.preview { width: 219px; height: 125px; margin: 6px 0 32px; }
.pv-text { fill: #aaa; font: 12px "Liberation Sans", sans-serif; }
.align { width: 217px; padding: 4px 7px 18px; display: grid; gap: 16px; }
.align label { height: 17px; }
.align input { appearance: none; width: 11px; height: 11px; border: 1px solid #555; border-radius: 50%; background: #fff; display: grid; place-items: center; }
.align input:checked::before { content: ""; width: 7px; height: 7px; border-radius: 50%; background: #222; }
.dlg-foot { display: flex; justify-content: flex-end; gap: 19px; padding: 7px 6px; }
.dlg-foot button { width: 63px; height: 16px; border: 1px solid #bcbcbc; background: #e0e0e0; }
.dlg-foot .ok { border: 2px solid #3c87c4; }

.tip { position: absolute; left: 21px; bottom: 6px; width: 257px; height: 128px; padding: 0 0 0 22px; background: rgba(34, 140, 240, .5); color: #fff; font: 700 19px/37px "Noto Sans CJK SC", sans-serif; white-space: nowrap; }

/* layout tabs, scrollbars, command line */
.layouts { height: 14px; flex: none; display: flex; align-items: center; background: #ededed; }
.steps { display: flex; }
.steps button { width: 12px; height: 13px; border-right: 1px solid #bbb; display: grid; place-items: center; }
.steps svg { width: 8px; height: 8px; }
.layout { padding: 0 3px; line-height: 14px; }
.layout.on { width: 36px; background: #000; color: #ddd; clip-path: polygon(0 0, 100% 0, 86% 100%, 14% 100%); }
.slash { width: 1px; height: 13px; background: #333; transform: rotate(25deg); margin: 0 3px; }
.hscroll { margin-left: auto; width: 355px; height: 14px; display: flex; align-items: center; gap: 3px; background: #f2f2f2; }
.hscroll svg { width: 9px; height: 9px; }
.split { width: 3px; height: 12px; border: 1px solid #999; }
.vscroll { width: 15px; background: #f0f0f0; padding: 3px; flex: none; }
.vscroll svg { width: 9px; height: 9px; }
.edge { width: 9px; flex: none; padding: 5px 0 0 3px; overflow: hidden; }
.edge-set { background: #ececec; display: flex; flex-direction: column; justify-content: space-around; overflow: hidden; padding-left: 1px; }
.e1 { height: 253px; margin-bottom: 8px; }
.e2 { height: 88px; }
.command { height: 15px; flex: none; margin-left: 19px; padding: 4px 0 0 4px; display: flex; gap: 6px; overflow: hidden; background: #c6c6c6; font: 12px/14px "Liberation Mono", "Noto Sans CJK SC", monospace; white-space: nowrap; }
.command input { flex: 1; height: 14px; border: 0; padding: 0; background: none; }

/* overlays */
.watermark { position: absolute; z-index: 3; left: 37px; top: 35px; display: flex; align-items: center; color: #fff; font: italic 700 31px/38px "Noto Sans CJK SC", sans-serif; -webkit-text-stroke: 6px #2c2c2c; paint-order: stroke fill; }
.watermark .latin { font: 600 32px/38px "Open Sans", sans-serif; }
.watermark svg { width: 20px; height: 34px; }
.brand { position: absolute; z-index: 3; right: 0; bottom: 0; width: 298px; height: 149px; background: #fff; display: flex; align-items: center; padding-left: 27px; color: #080808; }
.brand svg { width: 80px; height: 66px; }
.brand-text { display: flex; flex-direction: column; padding-top: 4px; font: italic 600 21px/22px "Open Sans", sans-serif; white-space: nowrap; }
.brand-text strong { font: italic 900 32px/30px "Noto Sans CJK SC", sans-serif; }
```
